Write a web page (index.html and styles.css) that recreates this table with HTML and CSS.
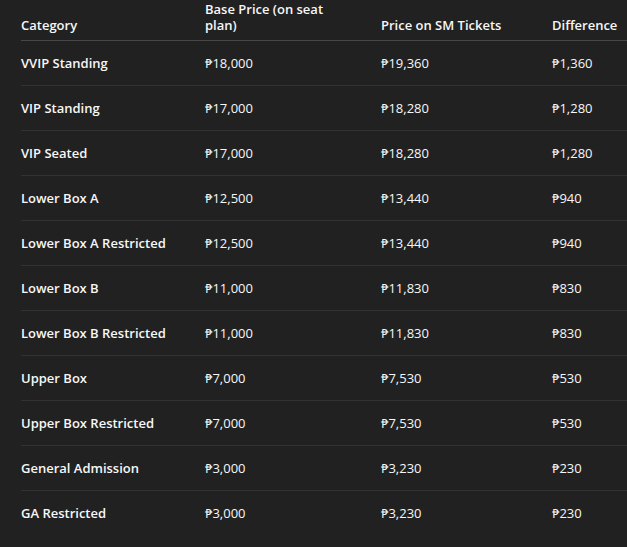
FILE: index.html
```html
<!DOCTYPE html>
<html lang="en">
<head>
<meta charset="utf-8">
<title>Ticket Prices</title>
<link rel="stylesheet" href="styles.css">
</head>
<body>
<div class="wrap">
<table class="prices">
  <thead>
    <tr>
      <th class="c1">Category</th>
      <th class="c2"><span class="wrapcell">Base Price (on seat plan)</span></th>
      <th class="c3">Price on SM Tickets</th>
      <th class="c4">Difference</th>
    </tr>
  </thead>
  <tbody>
    <tr><td class="cat">VVIP Standing</td><td>₱18,000</td><td>₱19,360</td><td>₱1,360</td></tr>
    <tr><td class="cat">VIP Standing</td><td>₱17,000</td><td>₱18,280</td><td>₱1,280</td></tr>
    <tr><td class="cat">VIP Seated</td><td>₱17,000</td><td>₱18,280</td><td>₱1,280</td></tr>
    <tr><td class="cat">Lower Box A</td><td>₱12,500</td><td>₱13,440</td><td>₱940</td></tr>
    <tr><td class="cat">Lower Box A Restricted</td><td>₱12,500</td><td>₱13,440</td><td>₱940</td></tr>
    <tr><td class="cat">Lower Box B</td><td>₱11,000</td><td>₱11,830</td><td>₱830</td></tr>
    <tr><td class="cat">Lower Box B Restricted</td><td>₱11,000</td><td>₱11,830</td><td>₱830</td></tr>
    <tr><td class="cat">Upper Box</td><td>₱7,000</td><td>₱7,530</td><td>₱530</td></tr>
    <tr><td class="cat">Upper Box Restricted</td><td>₱7,000</td><td>₱7,530</td><td>₱530</td></tr>
    <tr><td class="cat">General Admission</td><td>₱3,000</td><td>₱3,230</td><td>₱230</td></tr>
    <tr><td class="cat">GA Restricted</td><td>₱3,000</td><td>₱3,230</td><td>₱230</td></tr>
  </tbody>
</table>
</div>
</body>
</html>
```

FILE: styles.css
```css
html, body {
  margin: 0;
  padding: 0;
  background: #212121;
}
body {
  color: #f7f7f7;
  font-family: "Open Sans", "Noto Sans", "DejaVu Sans", sans-serif;
  font-size: 13px;
}
.wrap {
  padding-left: 21px;
}
.prices {
  border-collapse: collapse;
  table-layout: fixed;
  width: 606px;
}
.prices th {
  text-align: left;
  font-weight: 600;
  line-height: 16px;
  vertical-align: bottom;
  padding: 1px 0 7px 0;
  height: 32px;
  border-bottom: 1px solid #474747;
  white-space: nowrap;
}
.prices td {
  height: 44px;
  padding: 0;
  vertical-align: middle;
  border-bottom: 1px solid #323232;
  line-height: 16px;
  white-space: nowrap;
}
.prices tbody tr:last-child td {
  border-bottom: none;
}
.c1 { width: 184px; }
.c2 { width: 176px; }
.c3 { width: 171px; }
.c4 { width: 75px; }
.wrapcell {
  display: block;
  max-width: 140px;
  white-space: normal;
}
.cat {
  font-weight: 600;
}
```
